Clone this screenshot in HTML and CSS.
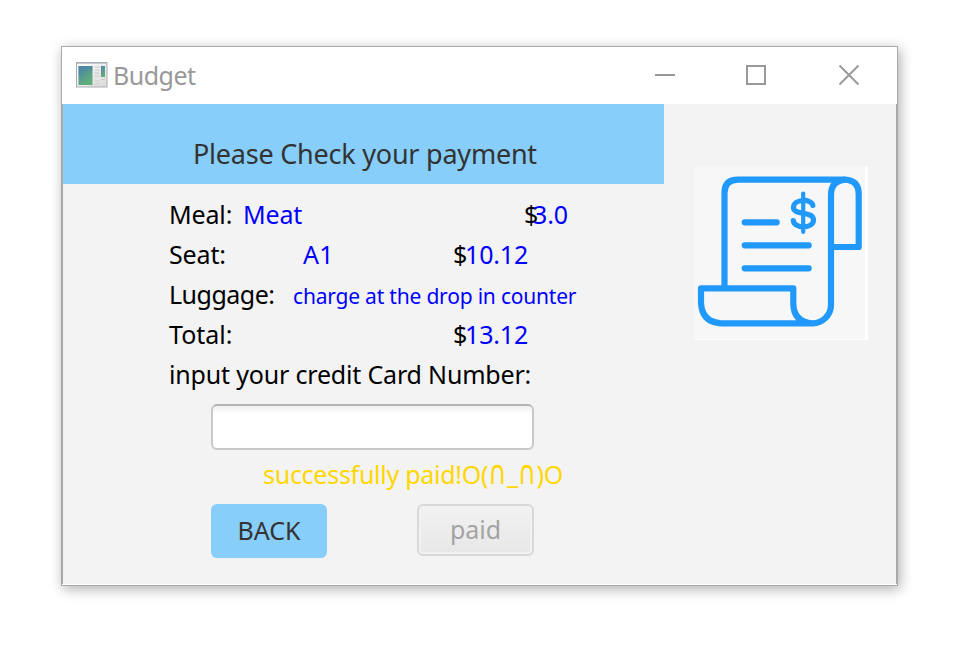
FILE: index.html
```html
<!DOCTYPE html>
<html lang="en">
<head>
<meta charset="utf-8">
<title>Budget</title>
<link rel="stylesheet" href="styles.css">
</head>
<body>
<main class="window">
  <header class="titlebar">
    <svg class="app-icon" width="32" height="26" viewBox="0 0 32 26">
      <defs>
        <linearGradient id="pane" x1="0" y1="0" x2=".6" y2="1"><stop offset="0" stop-color="#4b83ac"/><stop offset="1" stop-color="#61b077"/></linearGradient>
        <linearGradient id="frame" x1="0" y1="0" x2="1" y2="1"><stop offset="0" stop-color="#fff"/><stop offset="1" stop-color="#d9d9d9"/></linearGradient>
      </defs>
      <rect x=".5" y=".5" width="30.5" height="24.5" fill="url(#frame)" stroke="#a9adb3"/>
      <path d="M1 1.5H31" stroke="#c3c9d3"/>
      <rect x="2.500" y="4" width="14" height="19" fill="url(#pane)"/>
      <path d="M2.500 13Q7 8 16.500 8V4H2.500Z" fill="#4a86a5" opacity=".5"/>
      <path d="M18.500 5h5M18.500 8h5M18.500 11h5M18.500 14h5M18.500 19h5M18.500 22h5M25 17.500h4" stroke="#cacaca"/>
      <rect x="25" y="4" width="4" height="11" fill="url(#pane)"/>
    </svg>
    <span class="title">Budget</span>
    <svg class="controls" width="206" height="24" viewBox="0 0 206 24" fill="none" stroke="#999" stroke-width="2">
      <path d="M0 12H20"/>
      <rect x="92" y="3" width="18" height="18"/>
      <path d="M184.500 2.500L203.500 21.500M203.500 2.500L184.500 21.500" stroke-width="1.900"/>
    </svg>
  </header>
  <div class="content">
    <section class="form">
      <h1 class="banner"><span class="heading">Please Check your payment</span></h1>
      <div class="rows">
        <div class="row meal"><span class="label">Meal:</span><span class="value">Meat</span><span class="cur">$</span><span class="price">3.0</span></div>
        <div class="row seat"><span class="label">Seat:</span><span class="value">A1</span><span class="cur">$</span><span class="price">10.12</span></div>
        <div class="row luggage"><span class="label">Luggage:</span><span class="note">charge at the drop in counter</span></div>
        <div class="row total"><span class="label">Total:</span><span class="cur">$</span><span class="price">13.12</span></div>
        <div class="row"><span class="prompt">input your credit Card Number:</span></div>
      </div>
      <input class="card-number" type="text" aria-label="Credit card number">
      <p class="status">successfully paid!O(<span class="eye">∩</span>_<span class="eye">∩</span>)O</p>
      <div class="actions">
        <button class="back"><span class="back-text">BACK</span></button>
        <button class="paid" disabled><span class="paid-text">paid</span></button>
      </div>
    </section>
    <aside class="side">
      <div class="picture">
        <svg width="171" height="173" viewBox="0 0 171 173" fill="none" stroke="#2099fa" stroke-width="6.200" stroke-linejoin="round">
          <path d="M30.500 122V27Q30.500 13.700 44 13.700H151Q164.700 14.500 164.700 28V81H137"/>
          <path d="M151 13.700Q137 15 137 29V139A18.800 18.300 0 0 1 118.500 157.300Q99.300 156 99.300 137V122.300H7V137Q8 156 27 157.300H118.500"/>
          <path d="M50.700 56.300H82.700M50.700 79.300H114.700M50.700 102.300H114.700" stroke-linecap="round"/>
          <path d="M109.200 27.500V66" stroke-width="4.200" stroke-linecap="round"/>
          <path d="M118.800 39.500C118 32.500 99.500 32.500 99.500 41.500C99.500 50 119.500 44.500 119.500 54C119.500 63 100 63 99.300 54.500" stroke-width="5.200" stroke-linecap="round"/>
        </svg>
      </div>
    </aside>
  </div>
</main>
</body>
</html>
```
FILE: styles.css
```css
* { box-sizing: border-box; }
body {
  margin: 0;
  padding: 46px 0 0 61px;
  height: 650px;
  overflow: hidden;
  background: #fff;
  font-family: "Noto Sans", "Open Sans", "DejaVu Sans", sans-serif;
  font-size: 25px;
  color: #000;
}
.window {
  width: 837px;
  height: 540px;
  border: 1px solid #a9a9a9;
  background: #fff;
  box-shadow: 2px 3px 12px rgba(0, 0, 0, .32);
}
.titlebar {
  display: flex;
  align-items: center;
  height: 57px;
  padding: 0 36px 1px 14px;
}
.title {
  margin-left: 5px;
  color: #999;
  letter-spacing: -.5px;
  white-space: nowrap;
}
.controls { margin-left: auto; }
.content {
  display: flex;
  height: 480px;
  border: solid #a9a9a9;
  border-width: 0 1px;
  background: #f3f3f3;
}
.form { width: 601px; }
.banner {
  margin: 0;
  height: 80px;
  padding: 30px 0 0 130px;
  background: #87cefa;
  color: #333;
  font-size: 27px;
  font-weight: 400;
  line-height: 40px;
  letter-spacing: -.23px;
  white-space: nowrap;
}
.rows { padding: 10px 0 0 106px; }
.row {
  display: flex;
  height: 40px;
  line-height: 40px;
  letter-spacing: -.15px;
  white-space: nowrap;
}
.row > span { flex: none; }
.value, .price, .note { color: #00f; }
.meal .label { width: 74px; }
.meal .value { width: 281px; }
.meal .cur { width: 9px; }
.seat .label { width: 134px; }
.seat .value { width: 150px; letter-spacing: .3px; }
.seat .cur, .total .cur { width: 12px; }
.luggage .label { width: 124px; letter-spacing: -.5px; }
.total .label { width: 284px; letter-spacing: 0; }
.note { font-size: 21px; padding-top: 2px; letter-spacing: -.2px; }
.prompt { letter-spacing: -.18px; }
.card-number {
  display: block;
  width: 323px;
  height: 46px;
  margin: 10px 0 0 148px;
  padding: 0 12px;
  border: 2px solid #c8c8c8;
  border-top-color: #b6b6b6;
  border-radius: 6px;
  background: linear-gradient(#f0f0f0, #fff 8px);
  font: inherit;
  outline: none;
}
.status {
  height: 40px;
  margin: 4px 0 0 200px;
  line-height: 40px;
  letter-spacing: -.27px;
  color: #ffd700;
  white-space: nowrap;
}
.eye {
  display: inline-block;
  font-family: "DejaVu Sans", sans-serif;
  font-size: 25px;
  line-height: 1;
  letter-spacing: .4px;
  transform: scaleY(1.33);
  transform-origin: 50% 82%;
}
.actions {
  display: flex;
  align-items: flex-start;
  gap: 90px;
  margin: 10px 0 0 148px;
}
.back, .paid {
  padding: 0 0 2px;
  border: 0;
  border-radius: 6px;
  font: inherit;
}
.back { width: 116px; height: 54px; background: #87cefa; color: #333; }
.paid {
  width: 117px;
  height: 52px;
  border: 2px solid #d9d9d9;
  background: linear-gradient(#f2f2f2, #e7e7e7);
  box-shadow: inset 0 0 0 2px #f1f1f1;
  color: #a4a4a4;
}
.side { padding: 62px 0 0 30px; }
.picture {
  width: 174px;
  height: 174px;
  border: solid #fff;
  border-width: 0 3px 1px 0;
  background: #f7f7f7;
}
.picture svg { display: block; }
```
